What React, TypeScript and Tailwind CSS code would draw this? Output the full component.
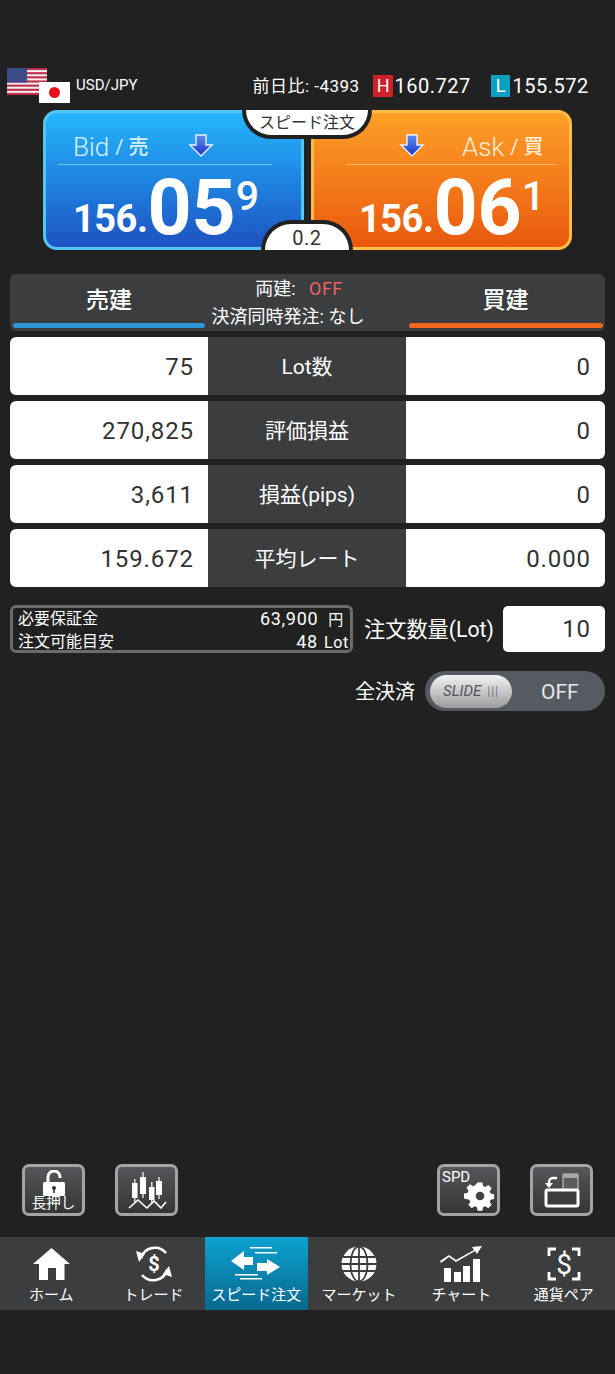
const rows = [
  { label: "Lot数", sell: "75", buy: "0" },
  { label: "評価損益", sell: "270,825", buy: "0" },
  { label: "損益(pips)", sell: "3,611", buy: "0" },
  { label: "平均レート", sell: "159.672", buy: "0.000" },
];

function DownArrow() {
  return (
    <svg width="26" height="24" viewBox="0 0 26 24">
      <defs>
        <linearGradient id="arrowFill" x1="0" y1="0" x2="0" y2="1">
          <stop offset="0" stopColor="#5b8df0" />
          <stop offset="1" stopColor="#1f35c8" />
        </linearGradient>
      </defs>
      <path d="M8 1h10v10h6L13 22 2 11h6z" fill="url(#arrowFill)" stroke="#e8f2ff" strokeWidth="1.4" />
    </svg>
  );
}

function UsFlag() {
  const stripes = [0, 1, 2, 3, 4, 5, 6];
  return (
    <svg width="40" height="27" viewBox="0 0 40 27" className="block">
      <rect width="40" height="27" fill="#f4f0f2" />
      {stripes.map((s) => (
        <rect key={s} y={s * 4.15} width="40" height="2.1" fill="#bf2f4a" />
      ))}
      <rect width="20" height="14.5" fill="#3c4a86" />
      <rect width="20" height="14.5" fill="none" stroke="#55629b" strokeWidth="0.5" strokeDasharray="1 1" />
    </svg>
  );
}

function PricePanel(props: { side: "bid" | "ask" }) {
  const bid = props.side === "bid";
  return (
    <div
      className={
        bid
          ? "h-[140px] w-[261px] rounded-l-[14px] rounded-r-[3px] border-[3px] border-[#55c5f5] bg-gradient-to-b from-[#27b6fd] to-[#1e52c2] pl-[12px] pr-[29px]"
          : "h-[140px] w-[261px] rounded-r-[14px] rounded-l-[3px] border-[3px] border-[#fdbd4b] bg-gradient-to-b from-[#fe9f27] to-[#e8570e] pl-[33px] pr-[13px]"
      }
    >
      <div className={bid ? "flex h-[52px] items-center border-b border-[#6cc4f6] pl-[15px] pt-[14px]" : "flex h-[52px] items-center border-b border-[#ffb868] pl-[52px] pt-[14px]"}>
        {bid ? (
          <>
            <span className="mt-[3px] text-[26px] font-light text-[#d7f0ff]">Bid</span>
            <span className="ml-[6px] mt-[3px] w-[73px] text-[20px] text-[#d7f0ff]">/ <b className="font-medium">売</b></span>
            <DownArrow />
          </>
        ) : (
          <>
            <DownArrow />
            <span className="ml-[37px] mt-[3px] text-[26px] font-light text-[#ffeeda]">Ask</span>
            <span className="ml-[6px] mt-[3px] text-[20px] text-[#ffeeda]">/ <b className="font-medium">買</b></span>
          </>
        )}
      </div>
      <div className={bid ? "flex items-start pl-[15px] pt-[4px] text-white" : "flex items-start pl-[12px] pt-[4px] text-white"}>
        <span className="mt-[28px] text-[38px] leading-[44px] font-bold tracking-[-0.5px]">156.</span>
        <span className="text-[77px] leading-[78px] font-bold">{bid ? "05" : "06"}</span>
        <span className="mt-[5px] text-[41px] leading-[44px] font-medium">{bid ? "9" : "1"}</span>
      </div>
    </div>
  );
}

function ToolButton(props: { children: React.ReactNode }) {
  return (
    <div className="flex h-[52px] w-[63px] items-center justify-center rounded-[7px] border-[3px] border-[#a3a5a5] bg-gradient-to-b from-[#55585a] to-[#333537]">
      {props.children}
    </div>
  );
}

function NavItem(props: { label: string; active?: boolean; children: React.ReactNode }) {
  return (
    <div
      className={
        props.active
          ? "flex h-[73px] w-[103px] flex-col items-center bg-gradient-to-b from-[#0ca3cf] to-[#07688f] pt-[7px]"
          : "flex h-[73px] flex-1 flex-col items-center pt-[7px]"
      }
    >
      <div className="flex h-[39px] items-center">{props.children}</div>
      <div className="mt-[2px] text-[15px] leading-[20px] whitespace-nowrap text-white">{props.label}</div>
    </div>
  );
}

export default function App() {
  return (
    <div className="flex h-[1374px] w-[615px] flex-col overflow-hidden bg-[#212121] font-['Roboto','Noto_Sans_CJK_JP',sans-serif] text-white">
      {/* currency pair and day stats */}
      <div className="flex h-[110px] items-start pl-[7px] pt-[68px]">
        <div className="flex">
          <UsFlag />
          <div className="-ml-[8px] mt-[14px] flex h-[21px] w-[31px] items-center justify-center bg-white">
            <div className="h-[11px] w-[11px] rounded-full bg-[#e8101c]" />
          </div>
        </div>
        <div className="ml-[6px] mt-[7px] text-[15px] leading-[20px]">USD/JPY</div>
        <div className="ml-[115px] mt-[7px] flex items-center leading-[22px] tracking-[0.5px]">
          <span className="w-[121px] text-[17px] whitespace-nowrap">前日比: -4393</span>
          <span className="flex h-[22px] w-[20px] items-center justify-center bg-[#cf1f27] text-[18px]">H</span>
          <span className="ml-[1px] w-[97px] text-[20px]">160.727</span>
          <span className="flex h-[22px] w-[19px] items-center justify-center bg-[#0b9fc1] text-[18px]">L</span>
          <span className="ml-[2px] text-[20px]">155.572</span>
        </div>
      </div>

      {/* bid / ask */}
      <div className="relative ml-[43px] flex w-[529px] justify-between">
        <PricePanel side="bid" />
        <PricePanel side="ask" />
        <div className="absolute left-[199px] top-0 flex h-[29px] w-[130px] items-center justify-center rounded-b-[34px] border-x-[4px] border-b-[4px] border-[#212121] bg-white text-[16px] whitespace-nowrap text-[#333]">
          スピード注文
        </div>
        <div className="absolute bottom-0 left-[218px] flex h-[30px] w-[92px] items-center justify-center rounded-t-[34px] border-x-[4px] border-t-[4px] border-[#212121] bg-white pt-[2px] text-[20px] tracking-[0.5px] text-[#333]">
          0.2
        </div>
      </div>

      {/* position table */}
      <div className="mx-[10px] mt-[24px] flex h-[57px] rounded-[6px] bg-[#3c3d3f]">
        <div className="flex w-[198px] flex-col items-center">
          <div className="mt-[11px] text-[23px] leading-[32px] font-medium">売建</div>
          <div className="mt-[6px] h-[5px] w-[192px] rounded-full bg-[#2f96d8]" />
        </div>
        <div className="flex w-[198px] flex-col items-center">
          <div className="mt-[3px] pr-[16px] text-[18px] leading-[24px] whitespace-nowrap">
            両建: <span className="ml-[9px] tracking-[0.5px] text-[#ee6262]">OFF</span>
          </div>
          <div className="mt-[4px] pr-[38px] text-[18px] leading-[24px] whitespace-nowrap">決済同時発注: なし</div>
        </div>
        <div className="flex w-[199px] flex-col items-center">
          <div className="mt-[11px] text-[23px] leading-[32px] font-medium">買建</div>
          <div className="mt-[6px] h-[5px] w-[194px] rounded-full bg-[#f0691e]" />
        </div>
      </div>

      <div className="mx-[10px] mt-[6px] flex flex-col gap-[6px]">
        {rows.map((row) => (
          <div key={row.label} className="flex h-[58px] overflow-hidden rounded-[6px] text-[24px] tracking-[0.9px]">
            <div className="flex w-[198px] items-center justify-end bg-white pr-[14px] pt-[1px] text-[#333]">{row.sell}</div>
            <div className="flex w-[198px] items-center justify-center bg-[#3c3d3f] pt-[3px] text-[21px] tracking-normal">{row.label}</div>
            <div className="flex w-[199px] items-center justify-end bg-white pr-[14px] pt-[1px] text-[#333]">{row.buy}</div>
          </div>
        ))}
      </div>

      {/* margin and order size */}
      <div className="mx-[10px] mt-[18px] flex items-center">
        <div className="h-[48px] w-[343px] rounded-[6px] border-[3px] border-[#6a6d70] pl-[5px] pr-[1px] text-[16px] leading-[21px]">
          <div className="flex justify-between">
            <span>必要保証金</span>
            <span className="pr-[5px] text-[18px] tracking-[0.7px]">63,900<span className="ml-[10px] text-[15px]">円</span></span>
          </div>
          <div className="flex justify-between">
            <span>注文可能目安</span>
            <span className="text-[18px] tracking-[0.7px]">48<span className="ml-[6px] text-[16px]">Lot</span></span>
          </div>
        </div>
        <div className="ml-[11px] w-[139px] pt-[1px] text-[21.2px] whitespace-nowrap">注文数量(Lot)</div>
        <div className="flex h-[46px] w-[102px] items-center justify-end rounded-[5px] bg-white pr-[14px] text-[24px] tracking-[0.9px] text-[#333]">10</div>
      </div>

      <div className="mx-[10px] mt-[18px] flex items-center justify-end">
        <div className="mr-[10px] pt-[1px] text-[20px]">全決済</div>
        <div className="flex h-[40px] w-[180px] items-center rounded-full bg-[#555a63] pl-[5px]">
          <div className="flex h-[33px] w-[82px] items-center justify-center gap-[6px] rounded-full bg-gradient-to-b from-[#f4f4f4] to-[#9c9c9c] text-[#50545c]">
            <span className="text-[15px] italic">SLIDE</span>
            <span className="text-[13px] font-light tracking-[1px]">|||</span>
          </div>
          <div className="ml-[29px] pt-[3px] text-[21px] text-[#e8e8e8]">OFF</div>
        </div>
      </div>

      {/* tool buttons */}
      <div className="mx-[22px] mt-auto flex">
        <ToolButton>
          <div className="flex flex-col items-center">
            <svg width="24" height="28" viewBox="0 0 24 28" className="-mb-[2px]">
              <path d="M6 13V7a6 6 0 0 1 12 0v1" fill="none" stroke="#fff" strokeWidth="3" />
              <rect x="1" y="12" width="22" height="14" rx="1.5" fill="#fff" />
              <circle cx="12" cy="18" r="2" fill="#333" />
              <rect x="11.2" y="18" width="1.6" height="5" fill="#333" />
            </svg>
            <span className="text-[14.5px] leading-[15px] whitespace-nowrap">長押し</span>
          </div>
        </ToolButton>
        <div className="ml-[30px]">
          <ToolButton>
            <svg width="40" height="38" viewBox="0 0 40 38" fill="#fff">
              <rect x="5" y="12" width="5.5" height="15" />
              <rect x="7.2" y="8" width="1.2" height="23" />
              <rect x="13" y="6" width="6" height="17" />
              <rect x="15.4" y="1" width="1.2" height="26" />
              <rect x="22" y="16" width="5.5" height="13" />
              <rect x="24.2" y="11" width="1.2" height="22" />
              <rect x="29" y="10" width="6" height="14" />
              <rect x="31.4" y="6" width="1.2" height="22" />
              <path d="M2 37l9-8 9 8 7-7 7 7 5-6" fill="none" stroke="#fff" strokeWidth="1.6" />
            </svg>
          </ToolButton>
        </div>
        <div className="ml-auto">
          <div className="relative h-[52px] w-[63px]">
            <ToolButton>
              <svg width="32" height="32" viewBox="-1 0 26 24" fill="#fff" className="ml-[22px] mt-[12px]">
                <path
                  fillRule="evenodd"
                  d="M10 1h4l.5 2.8 1.8.8 2.4-1.6 2.8 2.8-1.6 2.4.8 1.8 2.8.5v4l-2.8.5-.8 1.8 1.6 2.4-2.8 2.8-2.4-1.6-1.8.8-.5 2.8h-4l-.5-2.8-1.8-.8-2.4 1.6-2.8-2.8 1.6-2.4-.8-1.8L-1 14v-4l2.8-.5.8-1.8-1.6-2.4 2.8-2.8 2.4 1.6 1.8-.8zM12 8.5a3.5 3.5 0 1 0 0 7 3.5 3.5 0 0 0 0-7z"
                />
              </svg>
            </ToolButton>
            <span className="absolute left-[5px] top-[4px] text-[15px] leading-[18px]">SPD</span>
          </div>
        </div>
        <div className="ml-[30px]">
          <ToolButton>
            <svg width="38" height="36" viewBox="0 0 38 36">
              <rect x="20" y="2" width="15" height="16" rx="1" fill="#5b5e60" stroke="#a5a7a8" strokeWidth="1.5" />
              <rect x="20" y="2" width="15" height="4" fill="#a5a7a8" />
              <rect x="3" y="18" width="32" height="16" rx="1.5" fill="#3a3c3e" stroke="#fff" strokeWidth="3" />
              <path d="M6 14V10a4 4 0 0 1 4-4h4" fill="none" stroke="#fff" strokeWidth="2.4" />
              <path d="M2 11l4 5 4-5z" fill="#fff" />
            </svg>
          </ToolButton>
        </div>
      </div>

      {/* bottom nav */}
      <div className="mt-[21px] mb-[64px] flex h-[73px] bg-[#3c3d3f]">
        <NavItem label="ホーム">
          <svg width="37" height="32" viewBox="0 0 37 32" fill="#fff">
            <path d="M18.5 0L37 16h-5.5v16H23V20h-8v12H6V16H0z" />
          </svg>
        </NavItem>
        <NavItem label="トレード">
          <svg width="40" height="38" viewBox="0 0 40 38" fill="none" stroke="#fff" strokeWidth="2.6">
            <path d="M7 13A14.5 14.5 0 0 1 32 8" />
            <path d="M33 25A14.5 14.5 0 0 1 8 30" />
            <path d="M2 6l9 3-6 8z" fill="#fff" stroke="none" />
            <path d="M38 32l-9-3 6-8z" fill="#fff" stroke="none" />
            <text x="20" y="26" textAnchor="middle" fontSize="20" fontWeight="700" fill="#fff" stroke="none">$</text>
          </svg>
        </NavItem>
        <NavItem label="スピード注文" active>
          <svg width="50" height="33" viewBox="0 0 50 33" fill="#fff">
            <path d="M0 14l13-10v6h9v8h-9v5z" />
            <path d="M49 20L36 12v4H26v8h10v4z" />
            <rect x="19" y="0" width="22" height="1.5" />
            <rect x="24" y="5" width="22" height="1.5" />
            <rect x="4" y="27" width="23" height="1.5" />
            <rect x="9" y="31" width="22" height="1.5" />
          </svg>
        </NavItem>
        <NavItem label="マーケット">
          <svg width="36" height="36" viewBox="0 0 36 36" fill="none">
            <circle cx="18" cy="18" r="17.5" fill="#fff" />
            <path d="M18 0v36M0 18h36M2 11h32M2 25h32" stroke="#3c3d3f" strokeWidth="1.8" />
            <ellipse cx="18" cy="18" rx="8.5" ry="17.5" stroke="#3c3d3f" strokeWidth="1.8" />
          </svg>
        </NavItem>
        <NavItem label="チャート">
          <svg width="42" height="36" viewBox="0 0 42 36" fill="#fff">
            <rect x="4" y="22" width="7" height="14" />
            <rect x="14" y="26" width="7" height="10" />
            <rect x="23" y="20" width="7" height="16" />
            <rect x="33" y="13" width="7" height="23" />
            <path d="M0 15l9-6 7 5L34 4l-2-3 10-1-5 8-2-3-19 11-7-5-8 6z" />
          </svg>
        </NavItem>
        <NavItem label="通貨ペア">
          <svg width="34" height="34" viewBox="0 0 34 34" fill="none" stroke="#fff" strokeWidth="2.8">
            <path d="M9 2H2v7M25 2h7v7M2 25v7h7M32 25v7h-7" />
            <text x="17" y="27" textAnchor="middle" fontSize="28" fill="#fff" stroke="none">$</text>
          </svg>
        </NavItem>
      </div>
    </div>
  );
}
